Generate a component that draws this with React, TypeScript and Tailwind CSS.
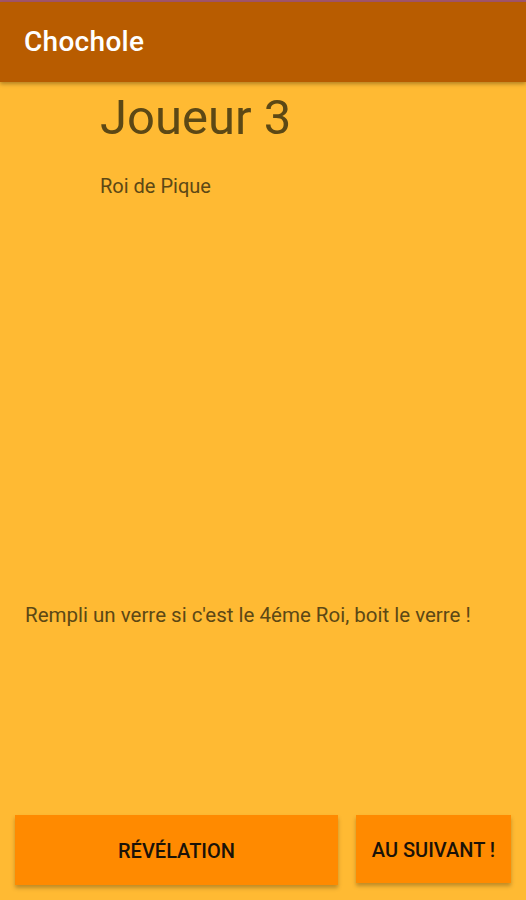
export default function App() {
  const font = { fontFamily: "Roboto, 'Liberation Sans', sans-serif" }

  return (
    <div className="flex h-[900px] w-full flex-col bg-[#ffba33]" style={font}>
      {/* App bar */}
      <div className="h-[2px] bg-[#a3566b]" />
      <header className="flex h-[80px] items-center bg-[#b85c00] px-6 shadow-[0_2px_4px_rgba(0,0,0,0.3)]">
        <h1 className="text-[28px] font-medium tracking-[0.3px] text-white">Chochole</h1>
      </header>

      {/* Card info */}
      <section className="pl-[100px] pt-[8px] text-[#5c4815]">
        <h2 className="text-[49px] leading-[56px]">Joueur 3</h2>
        <p className="mt-[28px] text-[20px] leading-6">Roi de Pique</p>
      </section>

      <p className="mt-[405px] px-[25px] text-[20.5px] leading-6 text-[#5c4815]">
        Rempli un verre si c'est le 4éme Roi, boit le verre !
      </p>

      <div className="flex-1" />

      {/* Actions */}
      <div className="flex items-start gap-[18px] px-[15px] pb-[15px]">
        <button className="h-[70px] flex-1 bg-[#ff8a00] pt-[2px] text-[20px] font-medium uppercase text-[#1a1208] shadow-[0_3px_4px_rgba(0,0,0,0.25)]">
          Révélation
        </button>
        <button className="h-[68px] w-[155px] bg-[#ff8a00] pt-[2px] text-[20px] font-medium uppercase text-[#1a1208] shadow-[0_3px_4px_rgba(0,0,0,0.25)]">
          Au suivant !
        </button>
      </div>
    </div>
  )
}
